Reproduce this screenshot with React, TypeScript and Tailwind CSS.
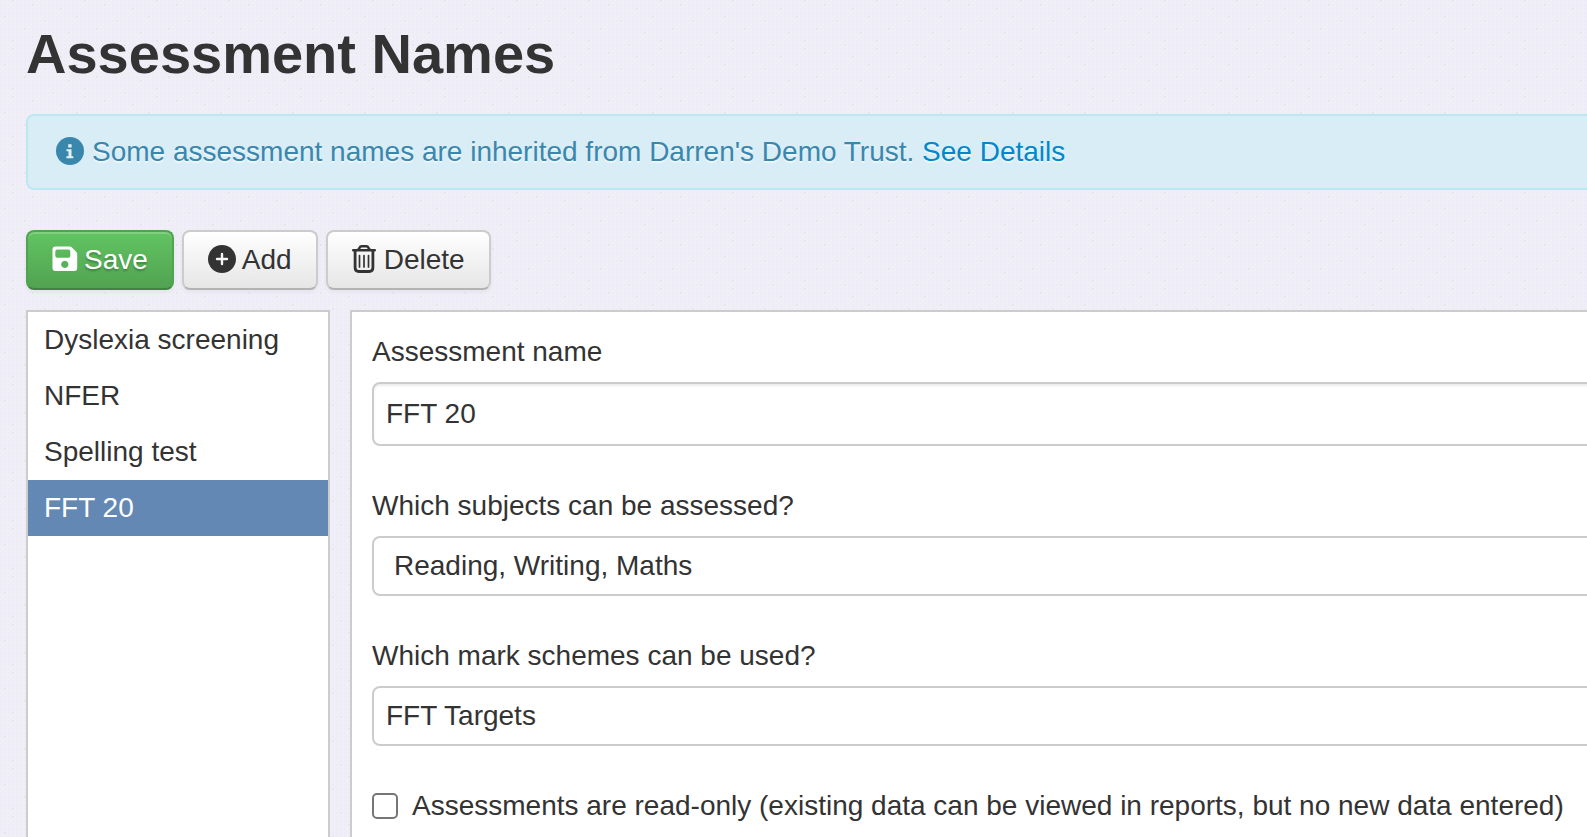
import { useState } from "react";

const assessments = ["Dyslexia screening", "NFER", "Spelling test", "FFT 20"];

const toolButton =
  "flex h-[60px] items-center rounded-lg border-2 px-6 leading-10";
const plainButton =
  "border-[#cccccc] border-b-[#b3b3b3] bg-linear-to-b from-white to-[#e6e6e6] shadow-[inset_0_2px_0_rgba(255,255,255,0.2),0_2px_4px_rgba(0,0,0,0.05)]";
const fieldBox =
  "mt-[10px] block w-full appearance-none rounded-lg border-2 border-[#cccccc] bg-white outline-none";
const icon = "mb-0.5 shrink-0";

function Texture() {
  return (
    <svg aria-hidden="true" className="absolute inset-0 -z-10 h-full w-full">
      <defs>
        <pattern id="weave" width="8" height="8" patternUnits="userSpaceOnUse">
          <rect width="8" height="8" fill="#f0eff8" />
          <path d="M0 0h2v2H0zM4 4h2v2H4zM4 0h2v2H4zM0 4h2v2H0z" fill="#edecf5" />
          <path d="M2 6h2v2H2zM6 2h2v2H6zM2 2h2v2H2z" fill="#eeedf8" />
        </pattern>
        <pattern id="specks" width="72" height="48" patternUnits="userSpaceOnUse">
          <path
            d="M12 0h2v2h-2zM32 4h2v2h-2zM60 8h2v2h-2zM4 16h2v2H4zM44 20h2v2h-2zM24 28h2v2h-2zM68 32h2v2h-2zM12 40h2v2h-2zM52 44h2v2h-2z"
            fill="#e6e5e7"
          />
        </pattern>
      </defs>
      <rect width="100%" height="100%" fill="url(#weave)" />
      <rect width="100%" height="100%" fill="url(#specks)" />
    </svg>
  );
}

function InfoIcon() {
  return (
    <svg aria-hidden="true" className={icon} width="28" height="28" viewBox="0 0 28 28">
      <circle cx="14" cy="14" r="14" fill="#3a87ad" />
      <path
        d="M12.2 7.2h3.4v3.2h-3.4zM10.5 12.3h5v7h1.8v2h-6.9v-2h2.1v-5h-2z"
        fill="#e4f3f8"
      />
    </svg>
  );
}

function SaveIcon() {
  return (
    <svg aria-hidden="true" className={icon} width="26" height="26" viewBox="0 0 26 26">
      <path
        fillRule="evenodd"
        fill="#fff"
        d="M3.5.5h14.2q1.2 0 2 .8l4.7 4.7q.8.8.8 2v14q0 3-3 3H3.5q-3 0-3-3V3.500q0-3 3-3zM5.300 3.500q-2 0-2 2v4.300q0 2 2 2h11q2 0 2-2V5.500q0-2-2-2zM12.800 14.800a3.600 3.600 0 1 0 .01 0z"
      />
    </svg>
  );
}

function AddIcon() {
  return (
    <svg aria-hidden="true" className={icon} width="28" height="28" viewBox="0 0 28 28">
      <circle cx="14" cy="14" r="14" fill="#333" />
      <path
        d="M14 9v10M9 14h10"
        stroke="#f5f5f5"
        strokeWidth="2.4"
        strokeLinecap="round"
      />
    </svg>
  );
}

function TrashIcon() {
  return (
    <svg
      aria-hidden="true"
      className={icon}
      width="24"
      height="28"
      viewBox="0 0 24 28"
      fill="none"
      stroke="#333"
      strokeLinecap="round"
      strokeLinejoin="round"
    >
      <path
        d="M1.300 5.300h21.400M6.200 4.900l1.400-2.300q.7-1.300 2-1.300h4.800q1.300 0 2 1.300l1.400 2.300"
        strokeWidth="2.600"
      />
      <path d="M3.100 5.500v17.300q0 3.700 3.700 3.700h10.400q3.700 0 3.700-3.700V5.500" strokeWidth="2.800" />
      <path d="M7.500 10.500v11.500M12 10.500v11.500M16.500 10.500v11.500" strokeWidth="1.700" />
    </svg>
  );
}

export default function App() {
  const [selected, setSelected] = useState("FFT 20");
  const [name, setName] = useState("FFT 20");
  const [readOnly, setReadOnly] = useState(false);

  return (
    <div className="relative isolate flex h-screen flex-col overflow-hidden pt-6 pl-[26px] font-['Liberation_Sans',Arial,sans-serif] text-[28px] leading-10 text-[#333333]">
      <Texture />
      <h1 className="text-[56px] leading-[60px] font-bold">Assessment Names</h1>

      <div className="-mr-2 mt-[30px] flex h-[76px] shrink-0 items-center gap-2 rounded-lg border-2 border-[#bce8f1] bg-[#d9edf7] px-7 text-[#3a87ad] [text-shadow:0_2px_0_rgba(255,255,255,0.5)]">
        <InfoIcon />
        <p>
          Some assessment names are inherited from Darren's Demo Trust.{" "}
          <a href="#details" className="text-[#0088cc]">
            See Details
          </a>
        </p>
      </div>

      <div className="mt-10 flex shrink-0 gap-2">
        <button
          type="button"
          className={`${toolButton} gap-[6px] border-[#51a351] border-b-[#418341] bg-linear-to-b from-[#62c462] to-[#51a351] text-white shadow-[inset_0_2px_0_rgba(255,255,255,0.2),0_2px_4px_rgba(0,0,0,0.05)] [text-shadow:0_2px_2px_rgba(0,0,0,0.25)]`}
        >
          <SaveIcon />
          Save
        </button>
        <button
          type="button"
          className={`${toolButton} ${plainButton} gap-[6px]`}
        >
          <AddIcon />
          Add
        </button>
        <button type="button" className={`${toolButton} ${plainButton} gap-2`}>
          <TrashIcon />
          Delete
        </button>
      </div>

      <div className="mt-5 flex min-h-0 flex-1 gap-5">
        <ul className="w-[304px] shrink-0 border-2 border-b-0 border-[#cccccc] bg-white">
          {assessments.map((item) => (
            <li key={item}>
              <button
                type="button"
                onClick={() => setSelected(item)}
                className={`block h-14 w-full px-4 text-left ${
                  item === selected ? "bg-[#6388b4] text-white" : ""
                }`}
              >
                {item}
              </button>
            </li>
          ))}
        </ul>

        <form className="-mr-8 min-w-0 flex-1 border-2 border-b-0 border-[#cccccc] bg-white px-5 pt-5">
          <label htmlFor="name" className="block">
            Assessment name
          </label>
          <input
            id="name"
            type="text"
            value={name}
            onChange={(e) => setName(e.target.value)}
            className={`${fieldBox} h-16 px-3 shadow-[inset_0_2px_2px_rgba(0,0,0,0.075)]`}
          />

          <label htmlFor="subjects" className="mt-10 block">
            Which subjects can be assessed?
          </label>
          <select id="subjects" className={`${fieldBox} h-[60px] px-5`}>
            <option>Reading, Writing, Maths</option>
          </select>

          <label htmlFor="schemes" className="mt-10 block">
            Which mark schemes can be used?
          </label>
          <select id="schemes" className={`${fieldBox} h-[60px] px-3`}>
            <option>FFT Targets</option>
          </select>

          <label className="mt-10 flex items-center gap-[14px] whitespace-nowrap">
            <input
              type="checkbox"
              checked={readOnly}
              onChange={(e) => setReadOnly(e.target.checked)}
              className="size-[26px] shrink-0 appearance-none rounded-[5px] border-2 border-[#767676] bg-white checked:bg-[#0075ff]"
            />
            Assessments are read-only (existing data can be viewed in reports,
            but no new data entered)
          </label>
        </form>
      </div>
    </div>
  );
}
